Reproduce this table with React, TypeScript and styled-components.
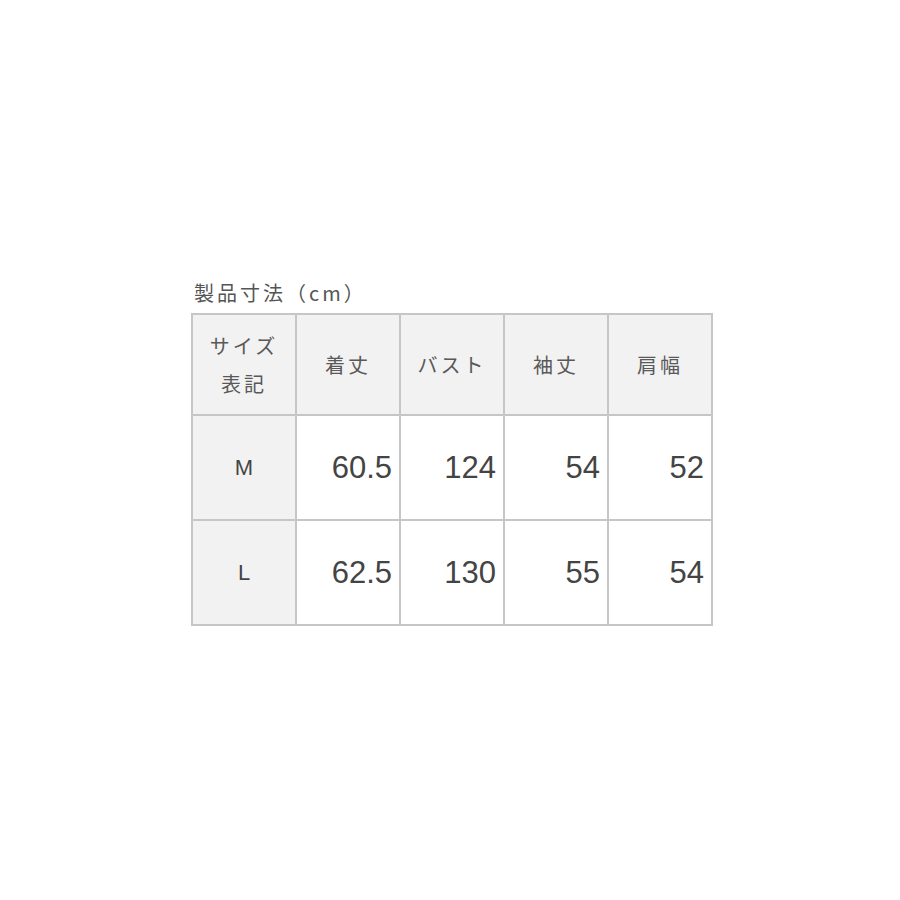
import styled, { createGlobalStyle } from 'styled-components';

const GlobalStyle = createGlobalStyle`
  html, body {
    margin: 0;
    padding: 0;
    background: #ffffff;
  }
  body {
    font-family: "Noto Sans CJK JP", "Liberation Sans", sans-serif;
  }
`;

interface SizeRow {
  size: string;
  length: string;
  bust: string;
  sleeve: string;
  shoulder: string;
}

const headers = ['着丈', 'バスト', '袖丈', '肩幅'];

const rows: SizeRow[] = [
  { size: 'M', length: '60.5', bust: '124', sleeve: '54', shoulder: '52' },
  { size: 'L', length: '62.5', bust: '130', sleeve: '55', shoulder: '54' },
];

function App() {
  return (
    <Page>
      <GlobalStyle />
      <Caption>製品寸法（cm）</Caption>
      <SizeTable>
        <tbody>
          <HeadRow>
            <HeadCell>
              <span>サイズ</span>
              <span>表記</span>
            </HeadCell>
            {headers.map((h) => (
              <HeadCell key={h}>{h}</HeadCell>
            ))}
          </HeadRow>
          {rows.map((r) => (
            <BodyRow key={r.size}>
              <SizeCell>{r.size}</SizeCell>
              <NumCell>{r.length}</NumCell>
              <NumCell>{r.bust}</NumCell>
              <NumCell>{r.sleeve}</NumCell>
              <NumCell>{r.shoulder}</NumCell>
            </BodyRow>
          ))}
        </tbody>
      </SizeTable>
    </Page>
  );
}

const Page = styled.div`
  width: 900px;
  height: 900px;
  box-sizing: border-box;
  padding: 279px 0 0 191px;
  display: flex;
  flex-direction: column;
  align-items: flex-start;
`;

const Caption = styled.div`
  font-family: "Noto Sans CJK JP", sans-serif;
  font-size: 20px;
  line-height: 28px;
  letter-spacing: 3px;
  color: #555555;
  margin: 0 0 6px 3px;
`;

const SizeTable = styled.table`
  border-collapse: collapse;
  table-layout: fixed;
  border: 2px solid #c6c6c6;
`;

const HeadRow = styled.tr`
  height: 101px;
`;

const BodyRow = styled.tr`
  height: 105px;
`;

const BaseCell = styled.td`
  width: 104px;
  border: 2px solid #c6c6c6;
  box-sizing: border-box;
  padding: 0;
`;

const HeadCell = styled(BaseCell)`
  background: #f2f2f2;
  color: #595959;
  font-family: "Noto Sans CJK JP", sans-serif;
  font-size: 20px;
  letter-spacing: 3px;
  text-align: center;
  vertical-align: middle;

  span {
    display: block;
    line-height: 38px;
  }
`;

const SizeCell = styled(BaseCell)`
  background: #f2f2f2;
  color: #444444;
  font-family: "Liberation Sans", sans-serif;
  font-size: 22px;
  text-align: center;
`;

const NumCell = styled(BaseCell)`
  background: #ffffff;
  color: #444444;
  font-family: "Liberation Sans", sans-serif;
  font-size: 31px;
  text-align: right;
  padding-right: 7px;
`;

export default App;
